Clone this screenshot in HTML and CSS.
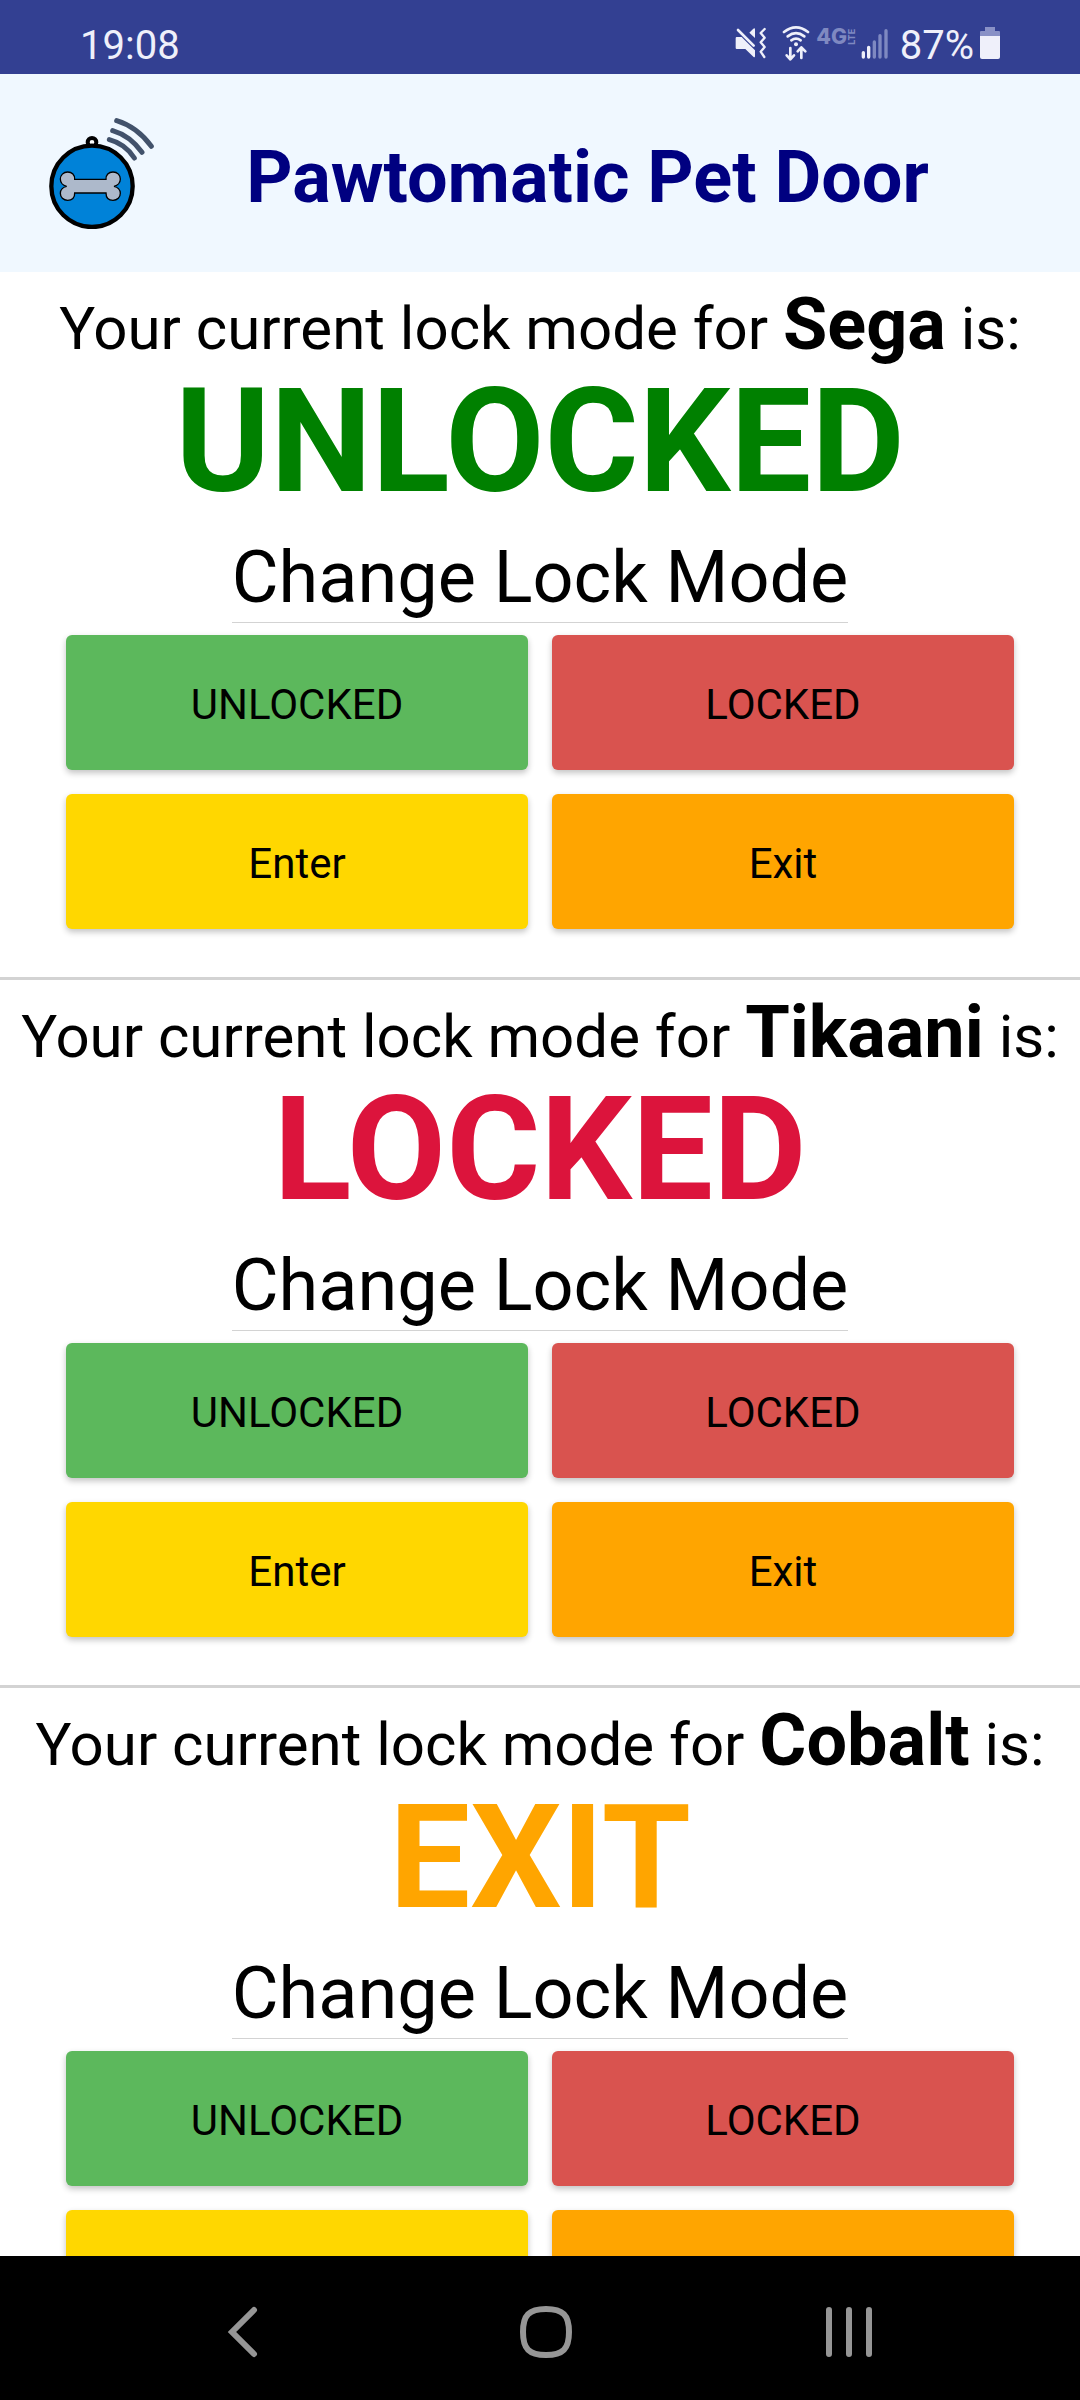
FILE: index.html
```html
<!DOCTYPE html>
<html lang="en">
<head>
<meta charset="utf-8">
<meta name="viewport" content="width=device-width, initial-scale=1">
<title>Pawtomatic Pet Door</title>
<link rel="stylesheet" href="styles.css">
</head>
<body class="screen">
<div class="status-bar">
  <span class="status-text">19:08</span>
  <div class="status-right">
    <svg class="status-icons" viewBox="99 72 465 114" aria-hidden="true">
      <g fill="#eff0fa">
        <path d="M107 111H122L130 119L162 151V168Q162 174 157 170L133 147H107Q104 147 104 143V115Q104 111 107 111Z"/>
        <path d="M145 98L157 86Q162 82 162 88V114Z"/>
        <circle cx="285" cy="133" r="6"/>
      </g>
      <g fill="none" stroke="#eff0fa" stroke-linecap="round" stroke-linejoin="round">
        <path d="M111 90L158 137" stroke-width="8"/>
        <path d="M191 87L179 99L191 113L179 127L191 141L179 155L190 171" stroke-width="7"/>
        <path d="M249 96Q285 68 321 96" stroke-width="8"/>
        <path d="M260 109Q285 90 310 109" stroke-width="8"/>
        <path d="M271 121Q285 111 299 121" stroke-width="8"/>
        <path d="M268 144V177M257 166L268 178L279 166M301 174V143M290 154L301 142L313 154" stroke-width="8"/>
        <path d="M487 158V171M503 142V171" stroke-width="10"/>
        <path d="M520 126V171M537 107V171M555 92V171" stroke-width="10" stroke="#7f89c1"/>
      </g>
      <g fill="#7f89c1" class="network">
        <text x="346" y="132" font-size="64">4G</text>
        <text transform="translate(462 134) rotate(-90)" font-size="27">LTE</text>
      </g>
    </svg>
    <span class="status-text">87%</span>
    <svg class="battery" viewBox="0 0 20 32" aria-hidden="true">
      <path d="M5 0H15V4H19Q20 4 20 5V9H0V5Q0 4 1 4H5Z" fill="#8991c6"/>
      <path d="M0 9H20V30Q20 32 18 32H2Q0 32 0 30Z" fill="#eff0fa"/>
    </svg>
  </div>
</div>

<header class="app-header">
  <svg class="logo" viewBox="54 48 321 339" role="img" aria-label="Pet tag">
    <circle cx="186" cy="127" r="13" fill="#fff" stroke="#000" stroke-width="12"/>
    <circle cx="186" cy="259" r="122" fill="#0082d8" stroke="#000" stroke-width="13"/>
    <path d="M134 238H228C227 224 236 216 249 216C263 216 271 226 271 237C271 249 262 257 252 259C262 261 271 269 271 280C271 292 262 301 249 301C236 301 228 293 228 279H134C135 293 126 301 113 301C100 301 91 292 91 280C91 269 100 261 110 259C100 257 91 249 91 237C91 226 100 216 113 216C126 216 135 224 134 238Z" fill="#adb9cb" stroke="#000" stroke-width="4"/>
    <g fill="none" stroke="#42526b" stroke-width="15" stroke-linecap="round">
      <path d="M260 62Q322 81 364 139"/>
      <path d="M248 92Q300 107 336 157"/>
      <path d="M238 119Q285 131 313 174"/>
    </g>
  </svg>
  <h1 class="app-title">Pawtomatic Pet Door</h1>
</header>

<main class="pets">
  <section class="pet">
    <p class="prompt">Your current lock mode for <strong class="pet-name">Sega</strong> is:</p>
    <p class="mode mode-unlocked">UNLOCKED</p>
    <h2 class="change">Change Lock Mode</h2>
    <div class="actions">
      <button class="action unlocked" type="button">UNLOCKED</button>
      <button class="action locked" type="button">LOCKED</button>
      <button class="action enter" type="button">Enter</button>
      <button class="action exit" type="button">Exit</button>
    </div>
  </section>
  <section class="pet">
    <p class="prompt">Your current lock mode for <strong class="pet-name">Tikaani</strong> is:</p>
    <p class="mode mode-locked">LOCKED</p>
    <h2 class="change">Change Lock Mode</h2>
    <div class="actions">
      <button class="action unlocked" type="button">UNLOCKED</button>
      <button class="action locked" type="button">LOCKED</button>
      <button class="action enter" type="button">Enter</button>
      <button class="action exit" type="button">Exit</button>
    </div>
  </section>
  <section class="pet">
    <p class="prompt">Your current lock mode for <strong class="pet-name">Cobalt</strong> is:</p>
    <p class="mode mode-exit">EXIT</p>
    <h2 class="change">Change Lock Mode</h2>
    <div class="actions">
      <button class="action unlocked" type="button">UNLOCKED</button>
      <button class="action locked" type="button">LOCKED</button>
      <button class="action enter" type="button">Enter</button>
      <button class="action exit" type="button">Exit</button>
    </div>
  </section>
</main>

<nav class="system-nav">
  <button class="nav-button" type="button" aria-label="Back">
    <svg class="nav-icon" viewBox="0 0 54 54"><path d="M38 5L16 27L38 49"/></svg>
  </button>
  <button class="nav-button" type="button" aria-label="Home">
    <svg class="nav-icon" viewBox="0 0 54 54"><path d="M27 4C44 4 50 10 50 27S44 50 27 50S4 44 4 27S10 4 27 4Z"/></svg>
  </button>
  <button class="nav-button" type="button" aria-label="Recent apps">
    <svg class="nav-icon" viewBox="0 0 54 54"><path d="M7 5V49M27 5V49M47 5V49"/></svg>
  </button>
</nav>
</body>
</html>
```
FILE: styles.css
```css
* {
  box-sizing: border-box;
}

.screen {
  display: flex;
  flex-direction: column;
  height: 100vh;
  margin: 0;
  background: #fff;
  color: #000;
  font-family: Roboto, "Liberation Sans", sans-serif;
}

.status-bar {
  display: flex;
  flex: none;
  align-items: flex-start;
  justify-content: space-between;
  height: 74px;
  padding: 20px 80px 0 80px;
  background: #334092;
  color: #eff0fa;
}

.status-text {
  font-size: 40px;
  line-height: 52px;
}

.status-right {
  display: flex;
}

.status-icons {
  width: 155px;
  height: 38px;
  margin: 4px 11px 0 0;
}

.network {
  font-family: Inter, sans-serif;
  font-weight: 800;
}

.battery {
  width: 20px;
  height: 32px;
  margin: 7px 0 0 6px;
}

.app-header {
  display: flex;
  flex: none;
  align-items: center;
  height: 198px;
  padding: 0 60px 0 48px;
  background: #f0f8ff;
}

.logo {
  flex: none;
  width: 107px;
  height: 113px;
  margin-bottom: 2px;
}

.app-title {
  flex: 1;
  margin: 0;
  padding-top: 10px;
  color: #000080;
  font-size: 72px;
  font-weight: 700;
  line-height: 84px;
  text-align: center;
}

.pets {
  flex: 1;
  min-height: 0;
  overflow-y: auto;
  scrollbar-width: none;
}

.pet {
  display: flex;
  flex-direction: column;
  align-items: center;
  padding: 15px 0 48px;
  border-bottom: 3px solid #d3d3d3;
}

.prompt {
  margin: 0;
  font-size: 60px;
  line-height: 84px;
  text-align: center;
}

.pet-name {
  font-size: 72px;
  font-weight: 700;
  line-height: 60px;
}

.mode {
  margin: 0;
  font-size: 144px;
  font-weight: 700;
  line-height: 142px;
}

.mode-unlocked {
  color: #008000;
}

.mode-locked {
  color: #dc143c;
}

.mode-exit {
  color: #ffa500;
}

.change {
  margin: 23px 0 12px;
  padding-bottom: 2px;
  border-bottom: 1px solid #d3d3d3;
  font-size: 72px;
  font-weight: 400;
  line-height: 84px;
}

.actions {
  display: grid;
  grid-template-columns: 1fr 1fr;
  gap: 24px;
  width: 100%;
  padding: 0 66px;
}

.action {
  height: 135px;
  padding: 4px 0 0;
  border: 0;
  border-radius: 6px;
  box-shadow: 0 3px 6px rgba(0, 0, 0, 0.24);
  color: #000;
  font: 400 42px/50px Roboto, "Liberation Sans", sans-serif;
}

.unlocked {
  background: #5cb85c;
}

.locked {
  background: #d9534f;
}

.enter {
  background: #ffd700;
}

.exit {
  background: #ffa500;
}

.system-nav {
  display: grid;
  flex: none;
  grid-template-columns: repeat(3, 1fr);
  height: 144px;
  padding: 0 79px 0 91px;
  background: #000;
}

.nav-button {
  display: flex;
  align-items: center;
  justify-content: center;
  padding: 8px 0 0;
  border: 0;
  background: none;
}

.nav-icon {
  width: 54px;
  height: 54px;
  fill: none;
  stroke: #969696;
  stroke-width: 6;
  stroke-linecap: round;
}
```
